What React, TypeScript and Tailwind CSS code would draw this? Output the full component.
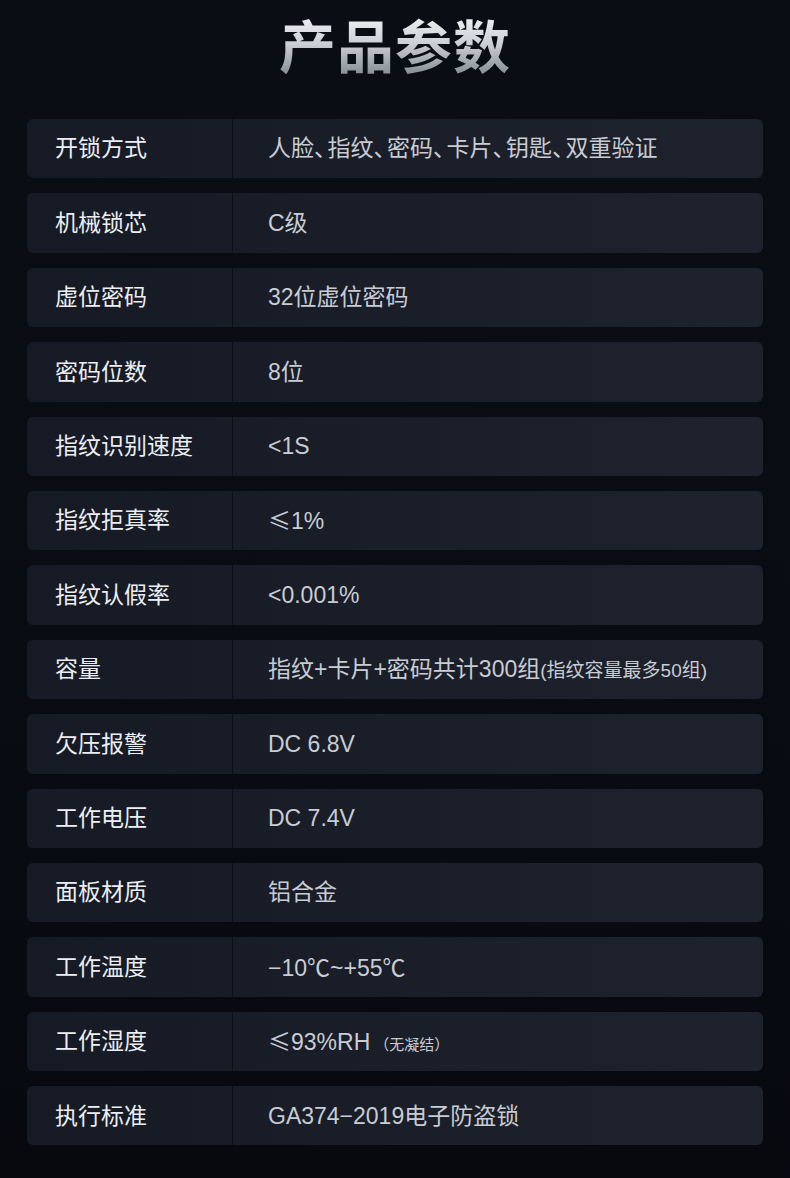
import React from 'react';

type Row = { label: string; value: React.ReactNode };

const cjk = { fontFamily: '"Noto Sans CJK SC", sans-serif' };
const dun = <span className="[font-feature-settings:'halt'] mr-[2px]">、</span>;
const le = <span style={cjk}>≤</span>;
const deg = <span style={cjk}>℃</span>;

const rows: Row[] = [
  {
    label: '开锁方式',
    value: (
      <>
        人脸{dun}指纹{dun}密码{dun}卡片{dun}钥匙{dun}双重验证
      </>
    ),
  },
  { label: '机械锁芯', value: 'C级' },
  { label: '虚位密码', value: '32位虚位密码' },
  { label: '密码位数', value: '8位' },
  { label: '指纹识别速度', value: '<1S' },
  { label: '指纹拒真率', value: <>{le}1%</> },
  { label: '指纹认假率', value: '<0.001%' },
  {
    label: '容量',
    value: (
      <>
        指纹+卡片+密码共计300组<span className="text-[19px]">(指纹容量最多50组)</span>
      </>
    ),
  },
  { label: '欠压报警', value: 'DC 6.8V' },
  { label: '工作电压', value: 'DC 7.4V' },
  { label: '面板材质', value: '铝合金' },
  { label: '工作温度', value: <>−10{deg}~+55{deg}</> },
  {
    label: '工作湿度',
    value: (
      <>
        {le}93%RH<span className="text-[15px] ml-[4px]">（无凝结）</span>
      </>
    ),
  },
  { label: '执行标准', value: 'GA374−2019电子防盗锁' },
];

const App = () => {
  return (
    <div
      className="w-[790px] h-[1178px] overflow-hidden bg-gradient-to-b from-[#0a0d14] via-[#090c13] to-[#07090f] pt-[12px]"
      style={{ fontFamily: '"Liberation Sans", "Noto Sans CJK SC", sans-serif' }}
    >
      {/* Title */}
      <h1
        className="h-[62px] flex items-center justify-center text-[57px] font-bold leading-none tracking-[1px] bg-gradient-to-b from-[#f4f5f7] via-[#cdd0d6] to-[#8a8f97] bg-clip-text text-transparent"
        style={cjk}
      >
        产品参数
      </h1>

      {/* Table */}
      <div className="mt-[45px] mx-[27px] flex flex-col gap-[15px]">
        {rows.map((row) => (
          <div
            key={row.label}
            className="h-[59.4px] flex rounded-[6px] overflow-hidden bg-gradient-to-r from-[#151a25] to-[#1d222d]"
          >
            <div className="w-[205px] shrink-0 flex items-center pl-[28px] text-[23px] text-[#eceef1]">
              {row.label}
            </div>
            <div className="flex-1 flex items-center pl-[35px] border-l border-[#0c0f16] text-[23px] text-[#c9ccd2] whitespace-nowrap">
              <span>{row.value}</span>
            </div>
          </div>
        ))}
      </div>
    </div>
  );
};

export default App;
